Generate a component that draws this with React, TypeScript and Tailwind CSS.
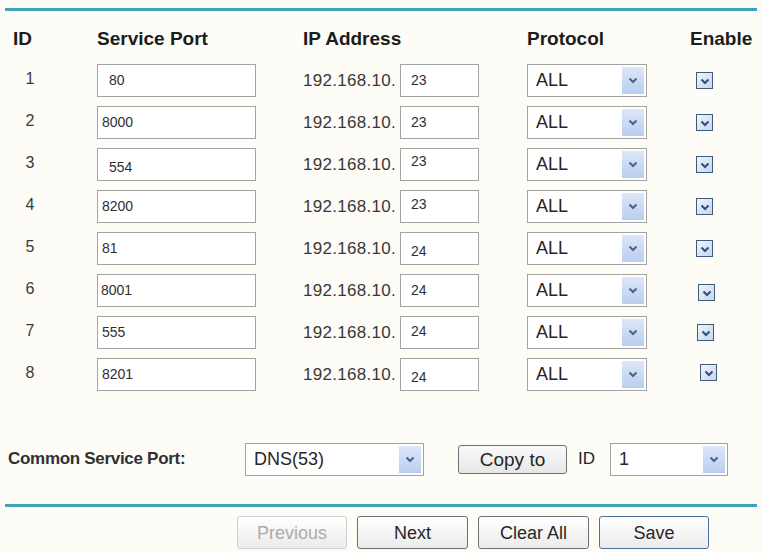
const font = "font-['Liberation_Sans',Arial,sans-serif]";

// pad / drop / cb reproduce the slightly uneven placement in the original page
const rows = [
    { id: 1, port: "80", ip: "23", pad: "pl-[11px]", drop: "", ipDrop: "", cb: "pl-[6px]" },
    { id: 2, port: "8000", ip: "23", pad: "pl-[4px]", drop: "", ipDrop: "", cb: "pl-[6px]" },
    { id: 3, port: "554", ip: "23", pad: "pl-[11px]", drop: "pt-[6px]", ipDrop: "-mt-[6px]", cb: "pl-[6px]" },
    { id: 4, port: "8200", ip: "23", pad: "pl-[4px]", drop: "", ipDrop: "-mt-[4px]", cb: "pl-[6px]" },
    { id: 5, port: "81", ip: "24", pad: "pl-[4px]", drop: "", ipDrop: "pt-[6px]", cb: "pl-[6px]" },
    { id: 6, port: "8001", ip: "24", pad: "pl-[3px]", drop: "", ipDrop: "", cb: "pl-[8px] pt-[4px]" },
    { id: 7, port: "555", ip: "24", pad: "pl-[4px]", drop: "", ipDrop: "-mt-[3px]", cb: "pl-[7px]" },
    { id: 8, port: "8201", ip: "24", pad: "pl-[4px]", drop: "", ipDrop: "pt-[5px]", cb: "pl-[10px] -mt-[4px]" },
];

const Arrow = () => (
    <div className="w-[22px] self-stretch my-[2px] mr-[2px] bg-gradient-to-b from-[#dde7f8] to-[#b9ceef] flex items-center justify-center">
        <svg width="10" height="7" viewBox="0 0 10 7">
            <path d="M1.5 1.5 L5 5 L8.5 1.5" fill="none" stroke="#4b6290" strokeWidth="2" />
        </svg>
    </div>
);

const Select = ({ value, width }: { value: string; width: string }) => (
    <div className={`${width} h-[33px] bg-white border border-[#a3a3a3] flex items-center`}>
        <span className="flex-1 pl-[8px] text-[18px] text-[#262626]">{value}</span>
        <Arrow />
    </div>
);

const Checkbox = () => (
    <div className="w-[17px] h-[17px] border border-[#3f5b7c] bg-gradient-to-br from-[#f0f4fb] to-[#c8d6ec] flex items-center justify-center">
        <svg width="12" height="12" viewBox="0 0 12 12">
            <path d="M2.5 4.5 L6 8 L9.5 4.5" fill="none" stroke="#2f4d7e" strokeWidth="2" />
        </svg>
    </div>
);

const Button = ({ label, width, variant = "normal" }: { label: string; width: string; variant?: "normal" | "disabled" | "default" }) => {
    const border =
        variant === "disabled" ? "border-[#cfcfcf] text-[#ababab]" : variant === "default" ? "border-[#4e6f9c] text-[#262626]" : "border-[#6f6f6f] text-[#262626]";
    return (
        <button className={`${width} h-[33px] rounded-[3px] border ${border} bg-gradient-to-b from-[#ffffff] to-[#ebebeb] text-[18px] leading-none`}>
            {label}
        </button>
    );
};

export default function App() {
    return (
        <div className={`w-[762px] h-[553px] bg-[#fdfcf6] ${font} overflow-hidden`}>
            <div className="pt-[8px] px-[5px]">
                <div className="h-[3px] bg-[#3aa3bb]" />
            </div>

            {/* column headers */}
            <div className="grid grid-cols-[97px_206px_224px_163px_72px] h-[53px] items-center pt-[3px] text-[19px] font-bold text-[#1c1c1c]">
                <div className="pl-[13px]">ID</div>
                <div>Service Port</div>
                <div>IP Address</div>
                <div>Protocol</div>
                <div>Enable</div>
            </div>

            <div className="flex flex-col gap-[10px]">
                {rows.map((r) => (
                    <div key={r.id} className="grid grid-cols-[97px_206px_224px_163px_72px] h-[32px] items-center">
                        <div className="w-[60px] text-center text-[16px] text-[#3a3a3a] -mt-[4px]">{r.id}</div>
                        <div className={`w-[159px] h-[33px] bg-white border border-[#a3a3a3] flex items-center ${r.pad} text-[14px] text-[#303030]`}>
                            <span className={r.drop}>{r.port}</span>
                        </div>
                        <div className="flex items-center">
                            <span className="w-[97px] text-[17px] text-[#383838] tracking-[0.3px]">192.168.10.</span>
                            <div className="w-[79px] h-[33px] bg-white border border-[#a3a3a3] flex items-center pl-[10px] text-[14px] text-[#303030]">
                                <span className={r.ipDrop}>{r.ip}</span>
                            </div>
                        </div>
                        <Select value="ALL" width="w-[120px]" />
                        <div className={r.cb}>
                            <Checkbox />
                        </div>
                    </div>
                ))}
            </div>

            {/* common service port */}
            <div className="flex items-center h-[34px] mt-[52px]">
                <span className="pl-[8px] w-[245px] text-[17px] font-bold text-[#303030] tracking-[-0.3px]">Common Service Port:</span>
                <Select value="DNS(53)" width="w-[179px]" />
                <div className="ml-[34px]">
                    <button className="w-[109px] h-[29px] rounded-[3px] border border-[#6f6f6f] bg-gradient-to-b from-[#fafafa] to-[#e6e6e6] text-[19px] leading-none text-[#262626]">
                        Copy to
                    </button>
                </div>
                <span className="ml-[11px] w-[32px] text-[17px] text-[#262626]">ID</span>
                <Select value="1" width="w-[118px]" />
            </div>

            <div className="px-[5px] mt-[28px]">
                <div className="h-[3px] bg-[#3aa3bb]" />
            </div>

            <div className="flex gap-[10px] pl-[237px] mt-[9px]">
                <Button label="Previous" width="w-[110px]" variant="disabled" />
                <Button label="Next" width="w-[111px]" />
                <Button label="Clear All" width="w-[111px]" />
                <Button label="Save" width="w-[110px]" variant="default" />
            </div>
        </div>
    );
}
